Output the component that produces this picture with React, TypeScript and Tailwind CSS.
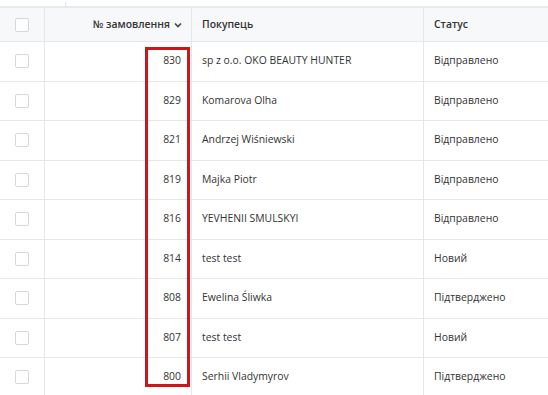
import React from "react";

interface Order {
  id: number;
  buyer: string;
  status: string;
}

const orders: Order[] = [
  { id: 830, buyer: "sp z o.o. OKO BEAUTY HUNTER", status: "Відправлено" },
  { id: 829, buyer: "Komarova Olha", status: "Відправлено" },
  { id: 821, buyer: "Andrzej Wiśniewski", status: "Відправлено" },
  { id: 819, buyer: "Majka Piotr", status: "Відправлено" },
  { id: 816, buyer: "YEVHENII SMULSKYI", status: "Відправлено" },
  { id: 814, buyer: "test test", status: "Новий" },
  { id: 808, buyer: "Ewelina Śliwka", status: "Підтверджено" },
  { id: 807, buyer: "test test", status: "Новий" },
  { id: 800, buyer: "Serhii Vladymyrov", status: "Підтверджено" },
];

// grid columns: checkbox | number | buyer | status
const cols = "grid grid-cols-[45px_147px_232px_1fr]";

function Checkbox() {
  return <div className="w-[14px] h-[14px] border border-[#d5d8dc] rounded-[2px] bg-white" />;
}

function Chevron() {
  return (
    <svg width="8" height="6" viewBox="0 0 8 6" className="ml-[4px] mt-[1px]">
      <polyline points="1,1.5 4,4.5 7,1.5" fill="none" stroke="#444" strokeWidth="1.6" />
    </svg>
  );
}

export default function App() {
  return (
    <div
      className="relative w-[548px] h-[395px] overflow-hidden bg-white text-[10.4px] text-[#333]"
      style={{ fontFamily: '"Open Sans", "Noto Sans", sans-serif' }}
    >
      {/* top strip */}
      <div className="h-[6px] flex">
        <div className="ml-[65px] mt-[1px] w-px h-[5px] bg-[#e3e6ea]" />
      </div>
      <div className="h-[2px] bg-[#e6e9ed]" />

      {/* header */}
      <div className={`${cols} h-[34px] bg-[#f7f8fa] border-b border-[#e4e7eb] font-semibold`}>
        <div className="flex items-center justify-center border-r border-[#e4e7eb]">
          <Checkbox />
        </div>
        <div className="flex items-center justify-end pr-[9px] border-r border-[#e4e7eb]">
          № замовлення
          <Chevron />
        </div>
        <div className="flex items-center pl-[10px] border-r border-[#e4e7eb]">Покупець</div>
        <div className="flex items-center pl-[10px]">Статус</div>
      </div>

      {/* rows */}
      {orders.map((o) => (
        <div key={o.id} className={`${cols} h-[39.5px] border-b border-[#e4e7eb]`}>
          <div className="flex items-center justify-center border-r border-[#e4e7eb]">
            <Checkbox />
          </div>
          <div className="flex items-center justify-end pr-[10px] border-r border-[#e4e7eb]">{o.id}</div>
          <div className="flex items-center pl-[10px] border-r border-[#e4e7eb]">{o.buyer}</div>
          <div className="flex items-center pl-[10px]">{o.status}</div>
        </div>
      ))}

      {/* red highlight annotation */}
      <div className="absolute left-[145px] top-[47px] w-[45px] h-[340px] border-[3px] border-[#d4121a]" />
    </div>
  );
}
